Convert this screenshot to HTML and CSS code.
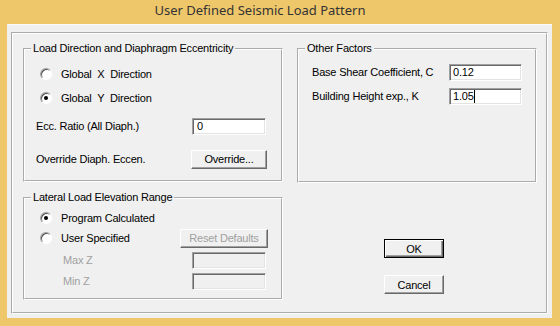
FILE: index.html
```html
<!DOCTYPE html>
<html lang="en">

<head>
  <meta charset="UTF-8" />
  <meta name="viewport" content="width=device-width, initial-scale=1.0" />
  <title>User Defined Seismic Load Pattern</title>
  <link rel="stylesheet" href="styles.css">
</head>

<body>
  <div class="window">
    <div class="titlebar">User Defined Seismic Load Pattern</div>

    <div class="client">
      <div class="frame">

        <div class="left-col">
          <fieldset class="group group-load">
            <legend>Load Direction and Diaphragm Eccentricity</legend>

            <div class="row row-first">
              <span class="radio"></span>
              <span class="radio-label">Global &nbsp;X &nbsp;Direction</span>
            </div>
            <div class="row row-second">
              <span class="radio checked"></span>
              <span class="radio-label">Global &nbsp;Y &nbsp;Direction</span>
            </div>

            <div class="row row-ecc">
              <span class="field-label">Ecc. Ratio (All Diaph.)</span>
              <div class="textbox">0</div>
            </div>

            <div class="row row-override">
              <span class="field-label">Override Diaph. Eccen.</span>
              <button class="btn btn-override">Override...</button>
            </div>
          </fieldset>

          <fieldset class="group group-elev">
            <legend>Lateral Load Elevation Range</legend>

            <div class="row elev-first">
              <span class="radio checked"></span>
              <span class="radio-label">Program Calculated</span>
            </div>
            <div class="row elev-second">
              <span class="radio"></span>
              <span class="radio-label">User Specified</span>
              <button class="btn btn-reset" disabled>Reset Defaults</button>
            </div>

            <div class="row elev-max">
              <span class="z-label">Max Z</span>
              <div class="textbox disabled"></div>
            </div>
            <div class="row elev-min">
              <span class="z-label">Min Z</span>
              <div class="textbox disabled"></div>
            </div>
          </fieldset>
        </div>

        <div class="right-col">
          <fieldset class="group group-other">
            <legend>Other Factors</legend>

            <div class="row other-first">
              <span class="factor-label">Base Shear Coefficient, C</span>
              <div class="textbox factor-box">0.12</div>
            </div>
            <div class="row other-second">
              <span class="factor-label">Building Height exp., K</span>
              <div class="textbox factor-box">1.05<span class="caret"></span></div>
            </div>
          </fieldset>

          <div class="actions">
            <button class="btn btn-action btn-default">OK</button>
            <button class="btn btn-action btn-cancel">Cancel</button>
          </div>
        </div>

      </div>
    </div>
  </div>
</body>

</html>
```

FILE: styles.css
```css
body {
  margin: 0;
  background-color: #efc76b;
  font-family: "Liberation Sans", Arial, sans-serif;
  font-size: 11px;
  letter-spacing: -0.2px;
  color: #000;
}

.window {
  width: 560px;
  height: 326px;
  display: flex;
  flex-direction: column;
}

.titlebar {
  height: 24px;
  line-height: 21px;
  text-align: center;
  padding-right: 40px;
  font-family: "Noto Sans", sans-serif;
  font-size: 13px;
  letter-spacing: 0;
  color: #333;
}

.client {
  height: 294px;
  margin: 0 8px 0 7px;
  padding: 7px 4px 4px 4px;
  box-sizing: border-box;
  background-color: #f0f0f0;
  border-top: 1px solid #fafafa;
}

.frame {
  height: 100%;
  box-sizing: border-box;
  border: 2px groove #fff;
  display: flex;
  gap: 14px;
  padding: 8px 0 0 10px;
}

.left-col {
  width: 260px;
  display: flex;
  flex-direction: column;
}

.right-col {
  width: 240px;
  display: flex;
  flex-direction: column;
}

.group {
  margin: 0;
  padding: 0 6px;
  border: 2px groove #fff;
  box-sizing: border-box;
  min-width: 0;
}

.group legend {
  padding: 0 2px;
  line-height: 13px;
}

.group-load {
  height: 140px;
}

.group-elev {
  height: 109px;
  margin-top: 9px;
}

.group-other {
  height: 141px;
}

.row {
  height: 20px;
  display: flex;
  align-items: center;
}

.row-first { margin-top: 9px; }
.row-second { margin-top: 4px; }
.row-ecc { margin-top: 8px; }
.row-override { margin-top: 13px; }

.elev-first { margin-top: 4px; }
.elev-second { margin-top: 0; }
.elev-max { margin-top: 2px; }
.elev-min { margin-top: 1px; }

.other-first { margin-top: 7px; }
.other-second { margin-top: 4px; }

/* radio buttons, classic sunken look */
.radio {
  width: 12px;
  height: 12px;
  box-sizing: border-box;
  margin-left: 9px;
  border-radius: 50%;
  border: 1px solid;
  border-color: #a0a0a0 #fff #fff #a0a0a0;
  background-color: #fff;
  box-shadow: inset 1px 1px 0 #555;
  display: flex;
  align-items: center;
  justify-content: center;
  flex-shrink: 0;
}

.radio.checked::after {
  content: "";
  width: 4px;
  height: 4px;
  border-radius: 50%;
  background-color: #000;
}

.radio-label {
  margin-left: 9px;
}

.field-label {
  width: 156px;
  margin-left: 5px;
}

.z-label {
  width: 129px;
  margin-left: 32px;
  color: #a0a0a0;
}

.factor-label {
  width: 137px;
  margin-left: 7px;
}

/* sunken edit boxes */
.textbox {
  width: 74px;
  height: 17px;
  box-sizing: border-box;
  background-color: #fff;
  border-top: 1px solid #a0a0a0;
  border-left: 1px solid #a0a0a0;
  border-right: 1px solid #fff;
  border-bottom: 1px solid #fff;
  box-shadow: inset 1px 1px 0 #696969, inset -1px -1px 0 #e3e3e3;
  padding: 1px 0 0 4px;
  line-height: 13px;
  display: flex;
}

.textbox.disabled {
  background-color: #f0f0f0;
}

.factor-box {
  width: 73px;
  padding-left: 3px;
}

.caret {
  width: 1px;
  height: 13px;
  background-color: #000;
}

/* raised buttons */
.btn {
  font-family: "Liberation Sans", Arial, sans-serif;
  font-size: 11px;
  letter-spacing: -0.2px;
  color: #000;
  background-color: #f0f0f0;
  height: 19px;
  padding: 0;
  box-sizing: border-box;
  border: 1px solid;
  border-color: #fff #696969 #696969 #fff;
  box-shadow: inset -1px -1px 0 #a0a0a0;
}

.btn-override {
  width: 76px;
  margin-left: -1px;
}

.btn-reset {
  width: 88px;
  margin-left: auto;
  margin-right: 7px;
  color: #a0a0a0;
}

.actions {
  display: flex;
  flex-direction: column;
  gap: 17px;
  margin-top: 56px;
  margin-left: 87px;
}

.btn-action {
  width: 60px;
}

.btn-default {
  border: 1px solid #000;
  box-shadow: inset 1px 1px 0 #fff, inset -1px -1px 0 #696969, inset -2px -2px 0 #a0a0a0;
}
```
